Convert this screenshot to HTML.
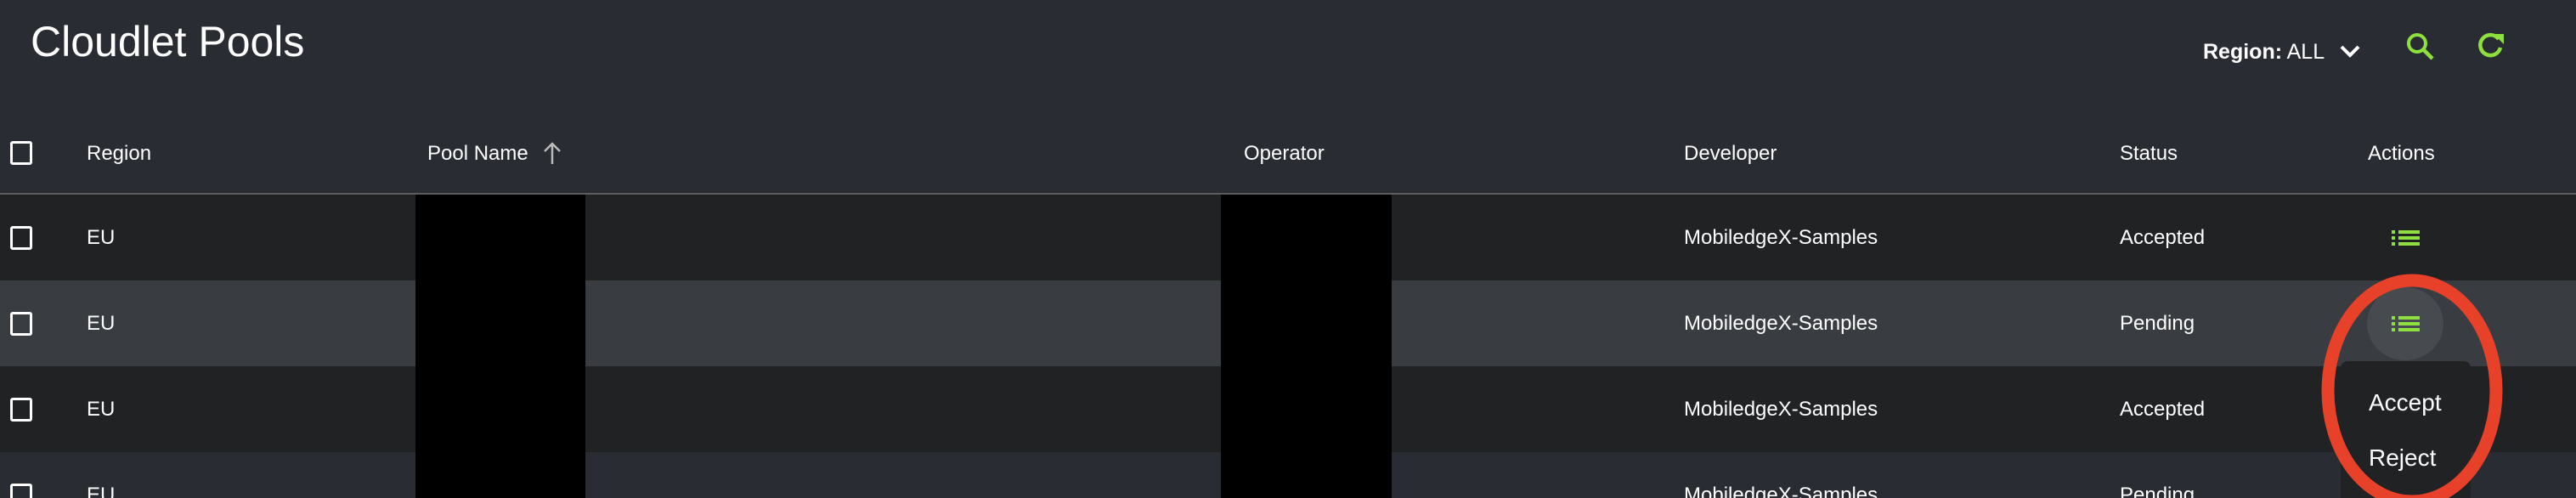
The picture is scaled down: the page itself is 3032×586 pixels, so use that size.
<!DOCTYPE html>
<html style="width:3032px;height:586px;overflow:hidden"><head><style>
*{margin:0;padding:0;box-sizing:border-box}
body{width:3032px;height:586px;background:#292c33;font-family:"Liberation Sans",sans-serif;color:#fff;position:relative;overflow:hidden}
.a{position:absolute}
.t{font-size:24px;line-height:24px}
.cb{position:absolute;left:12px;width:26px;height:28px;border:3px solid #fff;border-radius:3px}
.row{position:absolute;left:0;width:3032px;height:101px}
.li{position:absolute;left:2815px;width:33px;height:18px}
</style></head><body>
<div class="a" style="left:36px;top:22px;font-size:50px;line-height:54px">Cloudlet Pools</div>
<div class="a" style="left:2593px;top:47px;font-size:25px;line-height:28px"><b>Region:</b> ALL</div>
<svg class="a" style="left:2752px;top:50px" width="28" height="20" viewBox="0 0 28 20"><path d="M4 5l10 10 10-10" stroke="#fff" stroke-width="4" fill="none"/></svg>
<svg class="a" style="left:2831px;top:37px" width="36" height="36" viewBox="0 0 36 36"><circle cx="14" cy="14" r="10" stroke="#8de03d" stroke-width="4" fill="none"/><path d="M21 21l11 11" stroke="#8de03d" stroke-width="4.5"/></svg>
<svg class="a" style="left:2914px;top:36px" width="36" height="36" viewBox="0 0 36 36"><path d="M27 10A12 12 0 1 0 29 20" stroke="#8de03d" stroke-width="4.5" fill="none"/><path d="M21 4h12v12z" fill="#8de03d"/></svg>

<div class="cb" style="top:166px"></div>
<div class="a t" style="left:102px;top:169px">Region</div>
<div class="a t" style="left:503px;top:169px">Pool Name</div>
<svg class="a" style="left:638px;top:165px" width="24" height="30" viewBox="0 0 24 30"><path d="M12 28V4M3 13l9-9 9 9" stroke="#bbb" stroke-width="2.5" fill="none"/></svg>
<div class="a t" style="left:1464px;top:169px">Operator</div>
<div class="a t" style="left:1982px;top:169px">Developer</div>
<div class="a t" style="left:2495px;top:169px">Status</div>
<div class="a t" style="left:2787px;top:169px">Actions</div>
<div class="a" style="left:0;top:227px;width:3032px;height:2px;background:#5a5c60"></div>

<div class="row" style="top:229px;background:#212224"></div>
<div class="row" style="top:330px;background:#393c41"></div>
<div class="row" style="top:431px;background:#212224"></div>
<div class="row" style="top:532px;height:54px;background:#292c33"></div>

<div class="cb" style="top:266px"></div><div class="a t" style="left:102px;top:268px">EU</div>
<div class="a t" style="left:1982px;top:268px">MobiledgeX-Samples</div><div class="a t" style="left:2495px;top:268px">Accepted</div>
<div class="cb" style="top:367px"></div><div class="a t" style="left:102px;top:369px">EU</div>
<div class="a t" style="left:1982px;top:369px">MobiledgeX-Samples</div><div class="a t" style="left:2495px;top:369px">Pending</div>
<div class="cb" style="top:468px"></div><div class="a t" style="left:102px;top:470px">EU</div>
<div class="a t" style="left:1982px;top:470px">MobiledgeX-Samples</div><div class="a t" style="left:2495px;top:470px">Accepted</div>
<div class="cb" style="top:569px"></div><div class="a t" style="left:102px;top:571px">EU</div>
<div class="a t" style="left:1982px;top:571px">MobiledgeX-Samples</div><div class="a t" style="left:2495px;top:571px">Pending</div>

<div class="a" style="left:489px;top:229px;width:200px;height:357px;background:#000"></div>
<div class="a" style="left:1437px;top:229px;width:201px;height:357px;background:#000"></div>

<svg class="li" style="top:271px" viewBox="0 0 33 18"><g fill="#8de03d"><rect x="0" y="0" width="4" height="4"/><rect x="0" y="7" width="4" height="4"/><rect x="0" y="14" width="4" height="4"/><rect x="8" y="0" width="25" height="4"/><rect x="8" y="7" width="25" height="4"/><rect x="8" y="14" width="25" height="4"/></g></svg>
<div class="a" style="left:2786px;top:338px;width:90px;height:86px;border-radius:50%;background:#474a4f"></div>
<svg class="li" style="top:372px" viewBox="0 0 33 18"><g fill="#8de03d"><rect x="0" y="0" width="4" height="4"/><rect x="0" y="7" width="4" height="4"/><rect x="0" y="14" width="4" height="4"/><rect x="8" y="0" width="25" height="4"/><rect x="8" y="7" width="25" height="4"/><rect x="8" y="14" width="25" height="4"/></g></svg>

<div class="a" style="left:2755px;top:425px;width:153px;height:161px;border-radius:8px 8px 0 0;background:#212224"></div>
<div class="a" style="left:2788px;top:458px;font-size:28px;line-height:32px">Accept</div>
<div class="a" style="left:2788px;top:523px;font-size:28px;line-height:32px">Reject</div>

<svg class="a" style="left:0;top:0" width="3032" height="586"><ellipse cx="2839" cy="460" rx="99" ry="130" stroke="#e8412a" stroke-width="15" fill="none"/></svg>
</body></html>
